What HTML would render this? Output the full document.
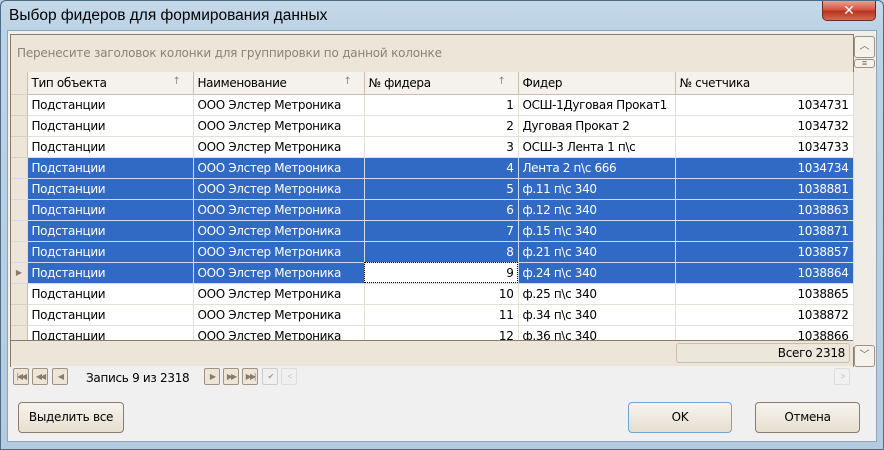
<!DOCTYPE html>
<html><head><meta charset="utf-8"><style>
*{margin:0;padding:0;box-sizing:border-box}
body{width:884px;height:450px;overflow:hidden;background:#b9d1e4;font-family:"Liberation Sans","DejaVu Sans",sans-serif;font-size:12px;position:relative}
.a{position:absolute}
.win{left:0;top:0;width:884px;height:450px;background:linear-gradient(180deg,#c4d8e8 0,#bcd3e5 30px,#b3cbe0 100%);border:1px solid #4d6a86;border-radius:6px 6px 0 0}
.title{left:9px;top:7px;font-size:15.5px;color:#000;font-family:"Liberation Sans",sans-serif}
.close{left:822px;top:1px;width:54px;height:20px;border:1px solid #6e2a20;border-top:none;border-radius:0 0 5px 5px;background:linear-gradient(#e8a191,#cf4f3a 50%,#b9311c 51%,#d46a4f);color:#fff;text-align:center;font-size:14px;font-weight:bold;line-height:19px}
.client{left:7px;top:30px;width:870px;height:412px;background:#f0f0f0;border:1px solid #8ea4b8}
.grid{left:10px;top:34px;width:844px;height:333px;border:1px solid #8b7b6b;background:#ece5d8}
.grp{left:17px;top:46px;color:#8c8378;font-size:12px;font-family:"DejaVu Sans",sans-serif;letter-spacing:-0.2px}
.tbl{left:11px;top:72px;width:842px}
table{border-collapse:collapse;table-layout:fixed;width:842px}
td,th{height:21px;padding:0 4px;white-space:nowrap;overflow:hidden;border-right:1px solid #e5e0d4;border-bottom:1px solid #e5e0d4;font-weight:normal;text-align:left;font-size:12px;font-family:"DejaVu Sans","Liberation Sans",sans-serif;letter-spacing:-0.35px}
th{height:22px;background:#f5f2eb;border-right:1px solid #c8bfb0;border-bottom:1px solid #c8bfb0;position:relative}
td{background:#fff}
td.r{text-align:right}
td.ind,th.ind{background:#ece5d8;border-right:1px solid #c8bfb0;border-bottom:1px solid #d8d0c2;padding:0}
tr.s td{background:#316ac5;color:#fff;border-color:#d0dcec}
tr.s td.ind{background:#ece5d8;color:#8b7b6b}
td.cur{background:#fff!important;color:#000!important;outline:1px dotted #000;outline-offset:-1px}
.ar{position:absolute;right:12px;top:4px;color:#888;font-size:10px}
.foot{left:11px;top:340px;width:842px;height:26px;background:#ece5d8;border-top:1px solid #8b7b6b}
.tot{left:676px;top:343px;width:174px;height:20px;border:1px solid #c8bfb0;border-radius:3px;background:#ede7db;text-align:right;padding-right:4px;line-height:18px;font-family:"DejaVu Sans",sans-serif;letter-spacing:-0.3px}
.vs{left:854px;top:34px;width:22px;height:333px;background:#f0ede6}
.sb{width:21px;height:22px;border:1px solid #a09383;border-radius:3px;background:#f5f2eb;text-align:center;color:#666;font-size:10px;line-height:20px}
.nav{left:11px;top:366px;width:842px;height:22px;background:#f0f0f0}
.nb{top:368px;width:16px;height:17px;border:1px solid #a09383;border-radius:2px;background:#ece5d8;color:#8b7b6b;font-size:8px;text-align:center;line-height:15px;letter-spacing:-2px}
.btn{height:31px;border:1px solid #8b7b6b;border-radius:4px;background:linear-gradient(#f7f4ee,#e6dfd0);text-align:center;line-height:29px;font-family:"DejaVu Sans",sans-serif;letter-spacing:-0.3px;font-size:12px}
</style></head><body>
<div class="a win"></div>
<div class="a title">Выбор фидеров для формирования данных</div>
<div class="a close">✕</div>
<div class="a client"></div>
<div class="a grid"></div>
<div class="a grp">Перенесите заголовок колонки для группировки по данной колонке</div>
<div class="a tbl"><table>
<colgroup><col style="width:16px"><col style="width:166px"><col style="width:171px"><col style="width:154px"><col style="width:157px"><col style="width:178px"></colgroup>
<tr><th class="ind"></th><th>Тип объекта<span class="ar">↑</span></th><th>Наименование<span class="ar">↑</span></th><th>№ фидера<span class="ar">↑</span></th><th>Фидер</th><th>№ счетчика</th></tr>
<tr><td class="ind"></td><td>Подстанции</td><td>ООО Элстер Метроника</td><td class="r">1</td><td>ОСШ-1Дуговая Прокат1</td><td class="r">1034731</td></tr>
<tr><td class="ind"></td><td>Подстанции</td><td>ООО Элстер Метроника</td><td class="r">2</td><td>Дуговая Прокат 2</td><td class="r">1034732</td></tr>
<tr><td class="ind"></td><td>Подстанции</td><td>ООО Элстер Метроника</td><td class="r">3</td><td>ОСШ-3 Лента 1 п\с</td><td class="r">1034733</td></tr>
<tr class="s"><td class="ind"></td><td>Подстанции</td><td>ООО Элстер Метроника</td><td class="r">4</td><td>Лента 2 п\с 666</td><td class="r">1034734</td></tr>
<tr class="s"><td class="ind"></td><td>Подстанции</td><td>ООО Элстер Метроника</td><td class="r">5</td><td>ф.11 п\с 340</td><td class="r">1038881</td></tr>
<tr class="s"><td class="ind"></td><td>Подстанции</td><td>ООО Элстер Метроника</td><td class="r">6</td><td>ф.12 п\с 340</td><td class="r">1038863</td></tr>
<tr class="s"><td class="ind"></td><td>Подстанции</td><td>ООО Элстер Метроника</td><td class="r">7</td><td>ф.15 п\с 340</td><td class="r">1038871</td></tr>
<tr class="s"><td class="ind"></td><td>Подстанции</td><td>ООО Элстер Метроника</td><td class="r">8</td><td>ф.21 п\с 340</td><td class="r">1038857</td></tr>
<tr class="s"><td class="ind" style="font-size:8px;text-align:center">▶</td><td>Подстанции</td><td>ООО Элстер Метроника</td><td class="r cur">9</td><td>ф.24 п\с 340</td><td class="r">1038864</td></tr>
<tr><td class="ind"></td><td>Подстанции</td><td>ООО Элстер Метроника</td><td class="r">10</td><td>ф.25 п\с 340</td><td class="r">1038865</td></tr>
<tr><td class="ind"></td><td>Подстанции</td><td>ООО Элстер Метроника</td><td class="r">11</td><td>ф.34 п\с 340</td><td class="r">1038872</td></tr>
<tr><td class="ind"></td><td>Подстанции</td><td>ООО Элстер Метроника</td><td class="r">12</td><td> ф.36 п\с 340</td><td class="r">1038866</td></tr>
</table></div>
<div class="a foot"></div>
<div class="a tot">Всего 2318</div>
<div class="a vs"></div>
<div class="a sb" style="left:854px;top:36px">︿</div>
<div class="a sb" style="left:854px;top:59px;height:9px;line-height:7px;font-size:9px">≡</div>
<div class="a sb" style="left:854px;top:345px">﹀</div>
<div class="a nav"></div>
<div class="a nb" style="left:13px">|◀◀</div>
<div class="a nb" style="left:32px">◀◀</div>
<div class="a nb" style="left:52px">◀</div>
<div class="a" style="left:86px;top:371px;font-family:'DejaVu Sans',sans-serif;letter-spacing:-0.3px">Запись 9 из 2318</div>
<div class="a nb" style="left:204px">▶</div>
<div class="a nb" style="left:223px">▶▶</div>
<div class="a nb" style="left:242px">▶▶|</div>
<div class="a nb" style="left:262px;background:#f0f0f0;border-color:#ccc;color:#999">✔</div>
<div class="a nb" style="left:281px;background:#f0f0f0;border-color:#ddd;color:#bbb">&lt;</div>
<div class="a nb" style="left:834px;background:#f0f0f0;border-color:#ddd;color:#bbb">&gt;</div>
<div class="a btn" style="left:18px;top:402px;width:106px">Выделить все</div>
<div class="a btn" style="left:628px;top:402px;width:104px;border-color:#6fa6d6">OK</div>
<div class="a btn" style="left:755px;top:402px;width:105px">Отмена</div>
</body></html>
